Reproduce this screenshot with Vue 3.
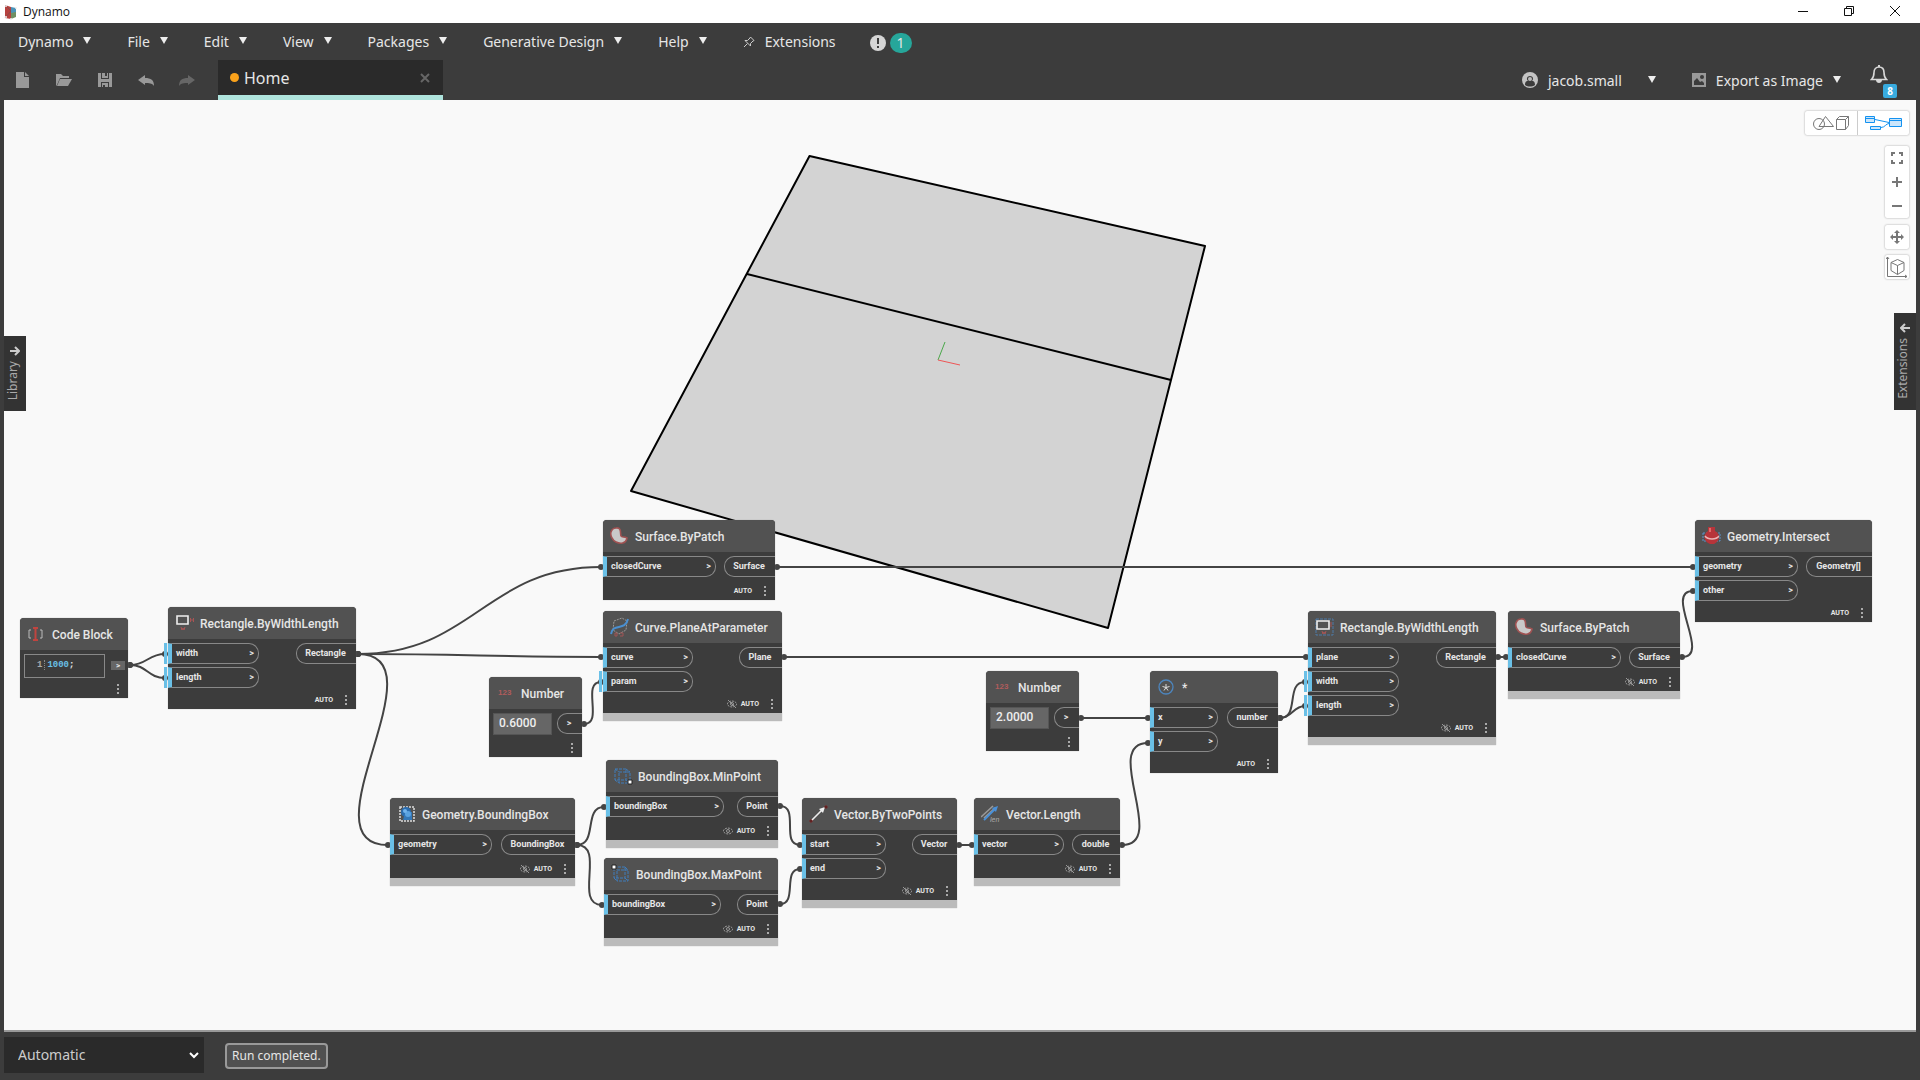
<script setup>
import { ref } from 'vue'

const menus = ['Dynamo', 'File', 'Edit', 'View', 'Packages', 'Generative Design', 'Help']
const runMode = ref('Automatic')

// x / y are canvas coordinates, inW / outW are port widths
const nodes = ref([
  { id: 1, title: 'Code Block', icon: 'code', x: 16, y: 518, w: 108, code: '1000;' },
  { id: 2, title: 'Rectangle.ByWidthLength', icon: 'rect', x: 164, y: 507, w: 188, inW: 91, outW: 60, out: 'Rectangle', ins: [{ name: 'width', level: true }, { name: 'length', level: true }] },
  { id: 3, title: 'Surface.ByPatch', icon: 'patch', x: 599, y: 420, w: 172, inW: 113, outW: 51, out: 'Surface', ins: [{ name: 'closedCurve' }] },
  { id: 4, title: 'Curve.PlaneAtParameter', icon: 'plane', x: 599, y: 511, w: 179, inW: 90, outW: 43, out: 'Plane', ins: [{ name: 'curve' }, { name: 'param', level: true }], hidden: true },
  { id: 5, title: 'Number', icon: 'number', x: 485, y: 577, w: 93, value: '0.6000' },
  { id: 6, title: 'Geometry.BoundingBox', icon: 'bbox', x: 386, y: 698, w: 185, inW: 102, outW: 74, out: 'BoundingBox', ins: [{ name: 'geometry' }], hidden: true },
  { id: 7, title: 'BoundingBox.MinPoint', icon: 'min', x: 602, y: 660, w: 172, inW: 118, outW: 41, out: 'Point', ins: [{ name: 'boundingBox' }], hidden: true },
  { id: 8, title: 'BoundingBox.MaxPoint', icon: 'max', x: 600, y: 758, w: 174, inW: 117, outW: 41, out: 'Point', ins: [{ name: 'boundingBox' }], hidden: true },
  { id: 9, title: 'Vector.ByTwoPoints', icon: 'vector', x: 798, y: 698, w: 155, inW: 84, outW: 45, out: 'Vector', ins: [{ name: 'start' }, { name: 'end' }], hidden: true },
  { id: 10, title: 'Vector.Length', icon: 'length', x: 970, y: 698, w: 146, inW: 90, outW: 48, out: 'double', ins: [{ name: 'vector' }], hidden: true },
  { id: 11, title: 'Number', icon: 'number', x: 982, y: 571, w: 93, value: '2.0000' },
  { id: 12, title: '*', icon: 'multiply', x: 1146, y: 571, w: 128, inW: 68, outW: 51, out: 'number', ins: [{ name: 'x' }, { name: 'y' }] },
  { id: 13, title: 'Rectangle.ByWidthLength', icon: 'rectplane', x: 1304, y: 511, w: 188, inW: 91, outW: 60, out: 'Rectangle', ins: [{ name: 'plane' }, { name: 'width', level: true }, { name: 'length', level: true }], hidden: true },
  { id: 14, title: 'Surface.ByPatch', icon: 'patch', x: 1504, y: 511, w: 172, inW: 113, outW: 51, out: 'Surface', ins: [{ name: 'closedCurve' }], hidden: true },
  { id: 15, title: 'Geometry.Intersect', icon: 'intersect', x: 1691, y: 420, w: 177, inW: 103, outW: 66, out: 'Geometry[]', ins: [{ name: 'geometry' }, { name: 'other' }] }
])

// [x1, y1, x2, y2]
const wires = [
  [126, 565, 161, 554],
  [126, 565, 161, 578],
  [354, 554, 597, 467],
  [354, 554, 597, 557],
  [354, 554, 384, 745],
  [580, 624, 597, 582],
  [573, 745, 600, 707],
  [573, 745, 598, 805],
  [776, 706, 796, 745],
  [776, 804, 796, 769],
  [955, 745, 968, 745],
  [1118, 745, 1144, 643],
  [1077, 618, 1144, 618],
  [1276, 618, 1301, 582],
  [1276, 618, 1301, 606],
  [773, 467, 1689, 467],
  [780, 557, 1302, 557],
  [1494, 557, 1502, 557],
  [1678, 557, 1689, 491]
]

const wirePath = ([x1, y1, x2, y2]) => {
  const off = Math.round(0.45 * Math.hypot(x2 - x1, y2 - y1))
  return `M${x1} ${y1}C${x1 + off} ${y1} ${x2 - off} ${y2} ${x2} ${y2}`
}
</script>

<template>
  <div class="app">
    <!-- Window title -->
    <div class="titlebar">
      <svg class="app-icon" width="14" height="16" viewBox="0 0 14 16">
        <path d="M1 1l6 2v12l-6-1z" fill="#b5413f" />
        <path d="M7 3l5 1v5l-5 1z" fill="#4a93b8" />
        <path d="M7 9l5-1v5l-5 2z" fill="#6f8f62" />
        <path d="M1 1l6 6-6 7" fill="none" stroke="#8a4a4a" />
        <g fill="#eee"><circle cx="2" cy="2" r="1" /><circle cx="12" cy="4" r="1" /><circle cx="2" cy="13" r="1" /><circle cx="7" cy="15" r="1" /></g>
      </svg>
      <span class="app-title">Dynamo</span>
      <div class="window-buttons">
        <button aria-label="Minimize"><svg width="10" height="10" viewBox="0 0 10 10"><path d="M0 5.500h10" /></svg></button>
        <button aria-label="Restore"><svg width="10" height="10" viewBox="0 0 10 10"><path d="M.5 2.500h7v7h-7zM2.500 2.500v-2h7v7h-2" /></svg></button>
        <button aria-label="Close"><svg width="10" height="10" viewBox="0 0 10 10"><path d="M0 0l10 10M10 0L0 10" /></svg></button>
      </div>
    </div>

    <!-- Menu and toolbar -->
    <header class="header">
      <nav class="menu">
        <button v-for="menu in menus" :key="menu" class="menu-item">
          {{ menu }}
          <svg class="caret" width="8" height="7" viewBox="0 0 8 7"><path d="M0 0h8L4 7z" /></svg>
        </button>
        <button class="menu-item">
          <svg width="12" height="12" viewBox="0 0 12 12" fill="none" stroke="#ccc"><path d="M7.500 1l3.500 3.500-1 .5-2.500 2.500V10L2 4.500h2.500L7 2zM4.500 7.500L1 11" /></svg>
          Extensions
        </button>
        <button class="notice" aria-label="Warnings">
          <svg width="16" height="16" viewBox="0 0 16 16"><circle cx="8" cy="8" r="8" fill="#d5d5d5" /><path d="M8 3v6M8 11v2" stroke="#3c3c3c" stroke-width="2" /></svg>
          <span class="notice-count">1</span>
        </button>
      </nav>

      <div class="toolbar">
        <div class="tools">
          <button aria-label="New"><svg width="16" height="16" viewBox="0 0 16 16"><path d="M1 0h8v5h5v11H1z" /><path d="M10 0l4 4h-4z" /></svg></button>
          <button aria-label="Open"><svg width="16" height="16" viewBox="0 0 16 16"><path d="M0 14V2h5l2 2h6v2H4L1 13z" /><path d="M4 7h12l-4 7H1z" /></svg></button>
          <button aria-label="Save"><svg width="16" height="16" viewBox="0 0 16 16"><path d="M1 1h3v6h8V1h3v14h-3v-5H4v5H1z" /><path d="M5 1h3v3h2V1h1v5H5zM5 11h6v4H8v-2H6v2H5z" /></svg></button>
          <button aria-label="Undo"><svg width="16" height="16" viewBox="0 0 16 16"><path d="M0 8l7-5v3c6 0 9 2 9 8-2-3-5-3-9-3v2z" /></svg></button>
          <button aria-label="Redo" class="disabled"><svg width="16" height="16" viewBox="0 0 16 16"><path d="M16 8L9 3v3C3 6 0 8 0 14c2-3 5-3 9-3v2z" /></svg></button>
        </div>
        <div class="tab">
          <span class="tab-dot"></span>
          <span class="tab-name">Home</span>
          <button class="tab-close" aria-label="Close tab"><svg width="10" height="10" viewBox="0 0 10 10"><path d="M1 1l8 8M9 1L1 9" stroke="#666" stroke-width="2" /></svg></button>
        </div>
        <div class="account">
          <button class="account-item user">
            <svg width="16" height="16" viewBox="0 0 16 16"><circle cx="8" cy="8" r="8" fill="#c4c4c4" /><path d="M3 13c0-4 2-4 3-4-2-2-1-5 2-5s4 3 2 5c1 0 3 0 3 4-3 2-7 2-10 0z" fill="#3c3c3c" /><circle cx="8" cy="7" r="2" fill="#bbb" /></svg>
            <span class="user-name">jacob.small</span>
            <svg class="caret" width="8" height="7" viewBox="0 0 8 7"><path d="M0 0h8L4 7z" /></svg>
          </button>
          <button class="account-item">
            <svg width="14" height="14" viewBox="0 0 14 14"><path d="M0 0h14v14H0z" fill="#999" /><circle cx="10" cy="4" r="2" fill="#3c3c3c" /><path d="M2 12V8l3-3 3 4 2-1 2 2v2z" fill="#3c3c3c" /></svg>
            Export as Image
            <svg class="caret" width="8" height="7" viewBox="0 0 8 7"><path d="M0 0h8L4 7z" /></svg>
          </button>
          <button class="bell" aria-label="Notifications">
            <svg width="18" height="20" viewBox="0 0 18 20"><path d="M1.500 15.500c2-2 2.500-4 2.500-7C4 5 6 3 9 3s5 2 5 5.500c0 3 .5 5 2.500 7z" fill="none" stroke="#d8d8d8" stroke-width="1.600" /><path d="M8 1h2v2H8zM6 16h6c0 4-6 4-6 0z" fill="#d8d8d8" /></svg>
            <span class="bell-count">8</span>
          </button>
        </div>
      </div>
    </header>

    <!-- Workspace -->
    <main class="canvas">
      <svg class="scene" width="100%" height="100%">
        <path class="surface" d="M805.500 56L1201 146 1104 528 627 391z" />
        <path class="surface" d="M743 174l424 106" />
        <path d="M934 260l7-18" stroke="#4aa84a" />
        <path d="M934 260l22 5" stroke="#ee5555" />
        <g v-for="(wire, i) in wires" :key="i">
          <path class="wire" :d="wirePath(wire)" />
          <circle :cx="wire[0]" :cy="wire[1]" r="3" />
          <circle :cx="wire[2]" :cy="wire[3]" r="3" />
        </g>
      </svg>

      <section
        v-for="node in nodes"
        :key="node.id"
        class="node"
        :class="{ hidden: node.hidden }"
        :style="{ left: node.x + 'px', top: node.y + 'px', width: node.w + 'px' }"
      >
        <div class="node-header">
          <svg class="node-icon" width="20" height="20" viewBox="0 0 20 20">
            <g v-if="node.icon === 'code'" fill="none"><path d="M4 6H2v8h2M13 6h2v8h-2" stroke="#bbb" /><path d="M6 4h5M8.500 4v12M6 16h5" stroke="#c0443f" stroke-width="2" /></g>
            <g v-else-if="node.icon === 'rect'" fill="none"><path d="M2 3h11v8H2z" stroke="#eee" stroke-width="1.600" /><path d="M15.500 5v4M18.500 5v4M15 7h4M6 14l1 3 1-2 1 2 1-3" stroke="#a85555" /></g>
            <g v-else-if="node.icon === 'rectplane'" fill="none"><path d="M1 2h17v16H1z" stroke="#4d7ba8" stroke-dasharray="3 1" /><path d="M2 4h12v8H2z" stroke="#eee" stroke-width="1.600" /><path d="M16 5v5M7 14l1 3 1-2 1 2 1-3" stroke="#a85555" /></g>
            <path v-else-if="node.icon === 'patch'" d="M6 2c6-1 4 6 5 8s3 0 6 2c-1 6-7 6-11 4C2 14 0 9 1 6c1-3 3-4 5-4z" fill="#c9c9c9" stroke="#a05252" stroke-width="1.600" />
            <g v-else-if="node.icon === 'plane'" fill="none"><path d="M4 4l8-3 5 3-1 9-7 4-6-4z" stroke="#999" stroke-dasharray="2 1" /><path d="M1 17c2-12 14-2 17-15" stroke="#4a8fd0" stroke-width="2" /><path d="M5 16h2v3H5zM10 16h3v3h-3" stroke="#a05555" /></g>
            <g v-else-if="node.icon === 'bbox'"><path d="M3 3h14v14H3z" fill="none" stroke="#ddd" stroke-width="1.500" stroke-dasharray="2 1" /><circle cx="9" cy="8" r="5" fill="#2b6cae" /><path d="M8 8h7v8H6z" fill="#3478b8" /><circle cx="11" cy="10" r="3" fill="#5aa2e0" /><circle cx="8" cy="7" r="2" fill="#72b4ec" /></g>
            <g v-else-if="node.icon === 'min'" fill="none" stroke="#3f7dbb"><path d="M2 3h11v11H2zM6 6h11v11H6zM2 3l4 3M13 3l4 3M2 14l4 3M13 14l4 3" stroke-dasharray="3 1" /><path d="M15 14h4v4h-4z" fill="#fff" stroke="#222" /></g>
            <g v-else-if="node.icon === 'max'" fill="none" stroke="#3f7dbb"><path d="M3 3h11v11H3zM6 6h11v11H6zM3 3l3 3M14 3l3 3M3 14l3 3M14 14l3 3" stroke-dasharray="3 1" /><path d="M1 1h4v4H1z" fill="#fff" stroke="#222" /></g>
            <g v-else-if="node.icon === 'vector'"><path d="M2 17L14 5" stroke="#eee" stroke-width="1.600" /><path d="M16 3l-2 6-4-4z" fill="#eee" /><path d="M1 16h2v2H1zM16 2h2v2h-2z" fill="#222" stroke="#722" /></g>
            <g v-else-if="node.icon === 'length'"><path d="M0 13L12 2M3 14L14 4" stroke="#999" stroke-width="1.600" /><path d="M3 16L14 5" stroke="#4a90d8" stroke-width="2" /><path d="M17 2l-2 6-4-4z" fill="#4a90d8" /><text x="9" y="18" class="icon-text len">len</text></g>
            <text v-else-if="node.icon === 'number'" x="2" y="12" class="icon-text num">123</text>
            <g v-else-if="node.icon === 'multiply'" fill="none"><circle cx="9" cy="10" r="7" stroke="#4d86bf" stroke-width="1.300" /><path d="M9 7v3.500M5.500 9.500L9 10.500l3.500-1M7 13.500l2-3 2 3" stroke="#ddd" /></g>
            <g v-else><path d="M1 7h17v8H1z" fill="none" stroke="#5a94cc" stroke-dasharray="2 1" /><path d="M6 1h7v4c6 3 5 10-1 13H8C1 15 1 8 6 5z" fill="#b7343a" /><path d="M3 10c3 4 11 4 14 0" fill="none" stroke="#eab5b5" stroke-width="1.500" /><path d="M8 2v4" stroke="#e06a6a" stroke-width="2" /></g>
          </svg>
          <span class="node-title">{{ node.title }}</span>
        </div>

        <div v-if="node.code" class="node-body value-row">
          <div class="code-box">
            <span class="line-number">1</span>
            <span class="code-text"><span class="code-value">1000</span>;</span>
          </div>
          <span class="code-out">&gt;</span>
        </div>
        <div v-else-if="node.value" class="node-body value-row">
          <input v-model="node.value" class="number-input" type="text" aria-label="Number value" />
          <span class="port out number-out">&gt;</span>
        </div>
        <div v-else class="node-body">
          <div class="inputs">
            <div v-for="port in node.ins" :key="port.name" class="port in" :class="{ level: port.level }" :style="{ width: node.inW + 'px' }">
              <span>{{ port.name }}</span>
              <span>&gt;</span>
            </div>
          </div>
          <div class="port out" :style="{ width: node.outW + 'px' }">{{ node.out }}</div>
        </div>

        <div class="node-footer">
          <svg v-if="node.hidden" width="10" height="8" viewBox="0 0 10 8" fill="none" stroke="#999"><path d="M0 4c2-4 8-4 10 0-2 4-8 4-10 0z" stroke-dasharray="2 1" /><circle cx="5" cy="4" r="1.500" /><path v-if="!['min', 'max'].includes(node.icon)" d="M1 0l8 8" /></svg>
          <span v-if="node.out">AUTO</span>
          <button class="more" aria-label="Node options"><i></i><i></i><i></i></button>
        </div>
      </section>

      <button class="side-tab library">
        <svg width="10" height="10" viewBox="0 0 10 10"><path d="M0 5h8M5 1l4 4-4 4" /></svg>
        <span>Library</span>
      </button>
      <button class="side-tab extensions">
        <svg width="10" height="10" viewBox="0 0 10 10"><path d="M10 5H2M5 1L1 5l4 4" /></svg>
        <span>Extensions</span>
      </button>

      <div class="view-controls">
        <div class="panel view-toggle">
          <button aria-label="Geometry view"><svg width="38" height="16" viewBox="0 0 38 16" fill="none" stroke="#777"><circle cx="7" cy="9" r="5.500" /><path d="M13.500 1.500l8 10H7zM24.500 4.500h9v10h-9zM24.500 4.500l3-3h9l-3 3M36.500 1.500v9l-3 4" /></svg></button>
          <button aria-label="Graph view"><svg width="38" height="16" viewBox="0 0 38 16" fill="#cce6fb" stroke="#1492f0"><path d="M10 4.500l14 3M16 12.500c4 0 5-4 8-4" fill="none" /><path d="M.5 1.500h9v6h-9zM.5 3.500h9M5.500 11.500h10v3h-10zM24.500 3.500h12v8h-12zM24.500 5.500h12" /></svg></button>
        </div>
        <div class="panel zoom-panel">
          <button aria-label="Fit"><svg width="12" height="12" viewBox="0 0 12 12"><path d="M1 4V1h3M8 1h3v3M11 8v3H8M4 11H1V8" /></svg></button>
          <button aria-label="Zoom in"><svg width="12" height="12" viewBox="0 0 12 12"><path d="M1 6h10M6 1v10" /></svg></button>
          <button aria-label="Zoom out"><svg width="12" height="12" viewBox="0 0 12 12"><path d="M1 6h10" /></svg></button>
        </div>
        <div class="panel single"><button aria-label="Pan"><svg width="14" height="14" viewBox="0 0 14 14"><path d="M2 7h10M7 2v10" /><path d="M7 0l3 3H4zM7 14l3-3H4zM0 7l3-3v6zM14 7l-3-3v6z" fill="#777" stroke="none" /></svg></button></div>
        <div class="panel single orbit"><button aria-label="Orbit"><svg class="thin" width="22" height="22" viewBox="0 0 22 22"><path d="M1.500 1v19.500H21M0 3l1.500-2L3 3M19 19l2 1.500-2 1.500M11.500 3.500l6.500 3v8l-6.500 4-6.500-4v-8zM5 6.500l6.500 3 6.500-3M11.500 9.500v9" /></svg></button></div>
      </div>
    </main>

    <!-- Run bar -->
    <footer class="run-bar">
      <div class="run-mode">
        <select v-model="runMode" aria-label="Run mode">
          <option>Automatic</option>
          <option>Manual</option>
        </select>
        <svg width="10" height="8" viewBox="0 0 10 8"><path d="M1 2l4 4 4-4" fill="none" stroke="#fff" stroke-width="2" /></svg>
      </div>
      <span class="run-status">Run completed.</span>
    </footer>
  </div>
</template>

<style>
body {
  margin: 0;
  background: #3c3c3c;
}
</style>

<style scoped>
.app {
  display: flex;
  flex-direction: column;
  min-height: 100vh;
  background: #3c3c3c;
  color: #e6e6e6;
  font-family: 'Noto Sans', 'Open Sans', sans-serif;
  font-size: 14px;
}

button {
  display: flex;
  align-items: center;
  justify-content: center;
  padding: 0;
  border: none;
  background: none;
  color: inherit;
  font: inherit;
  cursor: pointer;
}

svg {
  flex-shrink: 0;
}

.titlebar {
  display: flex;
  align-items: center;
  height: 23px;
  padding: 0 20px 0 4px;
  background: #fff;
  color: #111;
  font-family: 'Open Sans', sans-serif;
  font-size: 12px;
}

.app-icon {
  margin-right: 5px;
}

.window-buttons {
  display: flex;
  gap: 36px;
  margin-left: auto;
  margin-bottom: 2px;
}

.window-buttons path {
  fill: none;
  stroke: #111;
}

.menu {
  display: flex;
  align-items: center;
  gap: 36px;
  height: 37px;
  padding-left: 18px;
}

.menu-item {
  gap: 10px;
}

.caret {
  fill: #eee;
  margin-bottom: 2px;
}

.notice {
  gap: 4px;
  margin-top: 2px;
  margin-left: -2px;
}

.notice-count {
  width: 22px;
  border-radius: 10px;
  background: #26a69a;
  line-height: 20px;
}

.toolbar {
  display: flex;
  height: 40px;
}

.tools {
  display: flex;
  align-items: center;
  gap: 25px;
  width: 203px;
  padding-left: 15px;
}

.tools svg {
  fill: #999;
}

.tools .disabled svg {
  fill: #666;
}

.tab {
  display: flex;
  align-items: center;
  box-sizing: border-box;
  width: 225px;
  padding: 0 13px 0 12px;
  border-bottom: 5px solid #aee3dc;
  background: #2a2a2a;
  font-size: 16px;
}

.tab-dot {
  width: 9px;
  height: 9px;
  margin-right: 5px;
  border-radius: 50%;
  background: #faa21b;
}

.tab-close {
  margin-left: auto;
}

.account {
  display: flex;
  align-items: center;
  gap: 36px;
  margin-left: auto;
  padding-right: 22px;
}

.account-item {
  gap: 10px;
}

.user-name {
  margin-right: 16px;
}

.bell {
  position: relative;
  margin: 0 10px 12px -7px;
}

.bell-count {
  position: absolute;
  left: 13px;
  top: 20px;
  width: 14px;
  border-radius: 2px;
  background: #38abdf;
  color: #fff;
  font-size: 10px;
  font-weight: 700;
  line-height: 14px;
}

.canvas {
  position: relative;
  flex: 1;
  margin: 0 4px;
  border-bottom: 2px solid #999;
  background: #f9f9f9;
  overflow: hidden;
}

.scene {
  position: absolute;
  inset: 0;
  fill: #444;
}

.surface {
  fill: #d3d3d3;
  stroke: #000;
  stroke-width: 2;
  stroke-linejoin: round;
}

.wire {
  fill: none;
  stroke: #444;
  stroke-width: 2;
}

/* Nodes */
.node {
  position: absolute;
  border-radius: 4px 4px 0 0;
  background: #3c3c3c;
  color: #e6e6e6;
  font-family: Roboto, sans-serif;
  box-shadow: 0 0 1px #888;
}

.node.hidden {
  border-bottom: 8px solid #bbb;
}

.node-header {
  display: flex;
  align-items: center;
  gap: 5px;
  height: 32px;
  padding-left: 7px;
  border-radius: 4px 4px 0 0;
  background: #525252;
}

.node-title {
  padding-top: 1px;
  font-size: 12px;
  font-weight: 500;
  white-space: nowrap;
}

.icon-text {
  font-family: 'Liberation Sans', sans-serif;
}

.num {
  fill: #b05c5c;
  font-size: 8px;
  font-weight: 700;
}

.len {
  fill: #aaa;
  font-size: 7px;
  font-style: italic;
}

.node-body {
  display: flex;
  justify-content: space-between;
  min-height: 26px;
  padding-top: 4px;
}

.inputs {
  display: flex;
  flex-direction: column;
  gap: 3px;
  padding-bottom: 3px;
}

.port {
  display: flex;
  align-items: center;
  box-sizing: border-box;
  height: 21px;
  padding-bottom: 1px;
  border: 1px solid #888;
  font-size: 9px;
  font-weight: 700;
}

.port.in {
  position: relative;
  justify-content: space-between;
  padding: 0 4px 1px;
  border-left: 4px solid #6ac0e7;
  border-radius: 0 10px 10px 0;
}

.port.level::before {
  content: '';
  position: absolute;
  left: -8px;
  top: -1px;
  bottom: -1px;
  width: 3px;
  background: #6ac0e7;
}

.port.out {
  justify-content: center;
  padding-right: 2px;
  border-right: none;
  border-radius: 10px 0 0 10px;
}

.value-row {
  align-items: flex-start;
  padding-left: 4px;
}

.code-box {
  display: flex;
  align-items: center;
  box-sizing: border-box;
  width: 81px;
  height: 24px;
  padding: 0 0 2px 12px;
  border: 1px solid #888;
  font-family: 'Liberation Mono', monospace;
  font-size: 9px;
  font-weight: 700;
}

.line-number {
  padding-right: 2px;
  border-right: 1px dotted #888;
  color: #aaa;
}

.code-text {
  padding-left: 2px;
}

.code-value {
  color: #6ac0e7;
}

.code-out {
  width: 14px;
  margin: 7px 3px 0 0;
  background: #666;
  font-size: 8px;
  font-weight: 700;
  line-height: 9px;
  text-align: center;
}

.number-input {
  box-sizing: border-box;
  width: 59px;
  height: 22px;
  padding: 0 5px 2px;
  border: 1px solid #555;
  background: #666;
  color: #eee;
  font-family: Roboto, sans-serif;
  font-size: 12px;
  font-weight: 500;
}

.number-out {
  width: 25px;
}

.node-footer {
  display: flex;
  align-items: center;
  justify-content: flex-end;
  gap: 4px;
  height: 18px;
  padding-right: 9px;
  font-size: 7px;
  font-weight: 700;
}

.more {
  flex-direction: column;
  gap: 2px;
  margin-left: 8px;
}

.more i {
  width: 2px;
  height: 2px;
  background: #aaa;
}

/* Side tabs */
.side-tab {
  position: absolute;
  flex-direction: column;
  justify-content: flex-start;
  gap: 5px;
  width: 22px;
  padding: 10px 0 11px;
  background: #333;
  color: #aaa;
  font-size: 12px;
}

.side-tab svg {
  fill: none;
  stroke: #ccc;
  stroke-width: 2;
}

.side-tab span {
  margin-right: 4px;
  line-height: 18px;
  writing-mode: vertical-rl;
  transform: rotate(180deg);
}

.library {
  left: 0;
  top: 236px;
}

.extensions {
  right: 0;
  top: 213px;
}

/* View controls */
.view-controls {
  position: absolute;
  top: 11px;
  right: 7px;
  display: flex;
  flex-direction: column;
  align-items: flex-end;
}

.panel {
  display: flex;
  border-radius: 2px;
  background: #fff;
  box-shadow: 0 0 2px #999;
}

.view-toggle button {
  width: 52px;
  height: 24px;
}

.view-toggle button + button {
  border-left: 1px solid #ccc;
}

.zoom-panel {
  flex-direction: column;
  margin-top: 11px;
}

.zoom-panel button,
.single button {
  width: 24px;
  height: 24px;
}

.zoom-panel svg,
.single svg {
  fill: none;
  stroke: #777;
  stroke-width: 2;
}

.single .thin {
  stroke-width: 1;
}

.single {
  margin-top: 7px;
}

.orbit {
  margin-top: 6px;
}

/* Run bar */
.run-bar {
  display: flex;
  align-items: center;
  gap: 21px;
  height: 48px;
  padding-left: 4px;
}

.run-mode {
  display: grid;
  align-items: center;
  width: 200px;
  height: 36px;
  margin-bottom: 2px;
  background: #2a2a2a;
}

.run-mode select,
.run-mode svg {
  grid-area: 1 / 1;
}

.run-mode select {
  height: 36px;
  padding: 0 14px 2px;
  border: none;
  background: transparent;
  color: #ccc;
  font: inherit;
  appearance: none;
}

.run-mode svg {
  justify-self: end;
  margin-right: 5px;
  pointer-events: none;
}

.run-status {
  padding: 0 5px;
  border: 2px solid #999;
  border-radius: 4px;
  background: #505050;
  font-size: 12px;
  line-height: 22px;
}
</style>
